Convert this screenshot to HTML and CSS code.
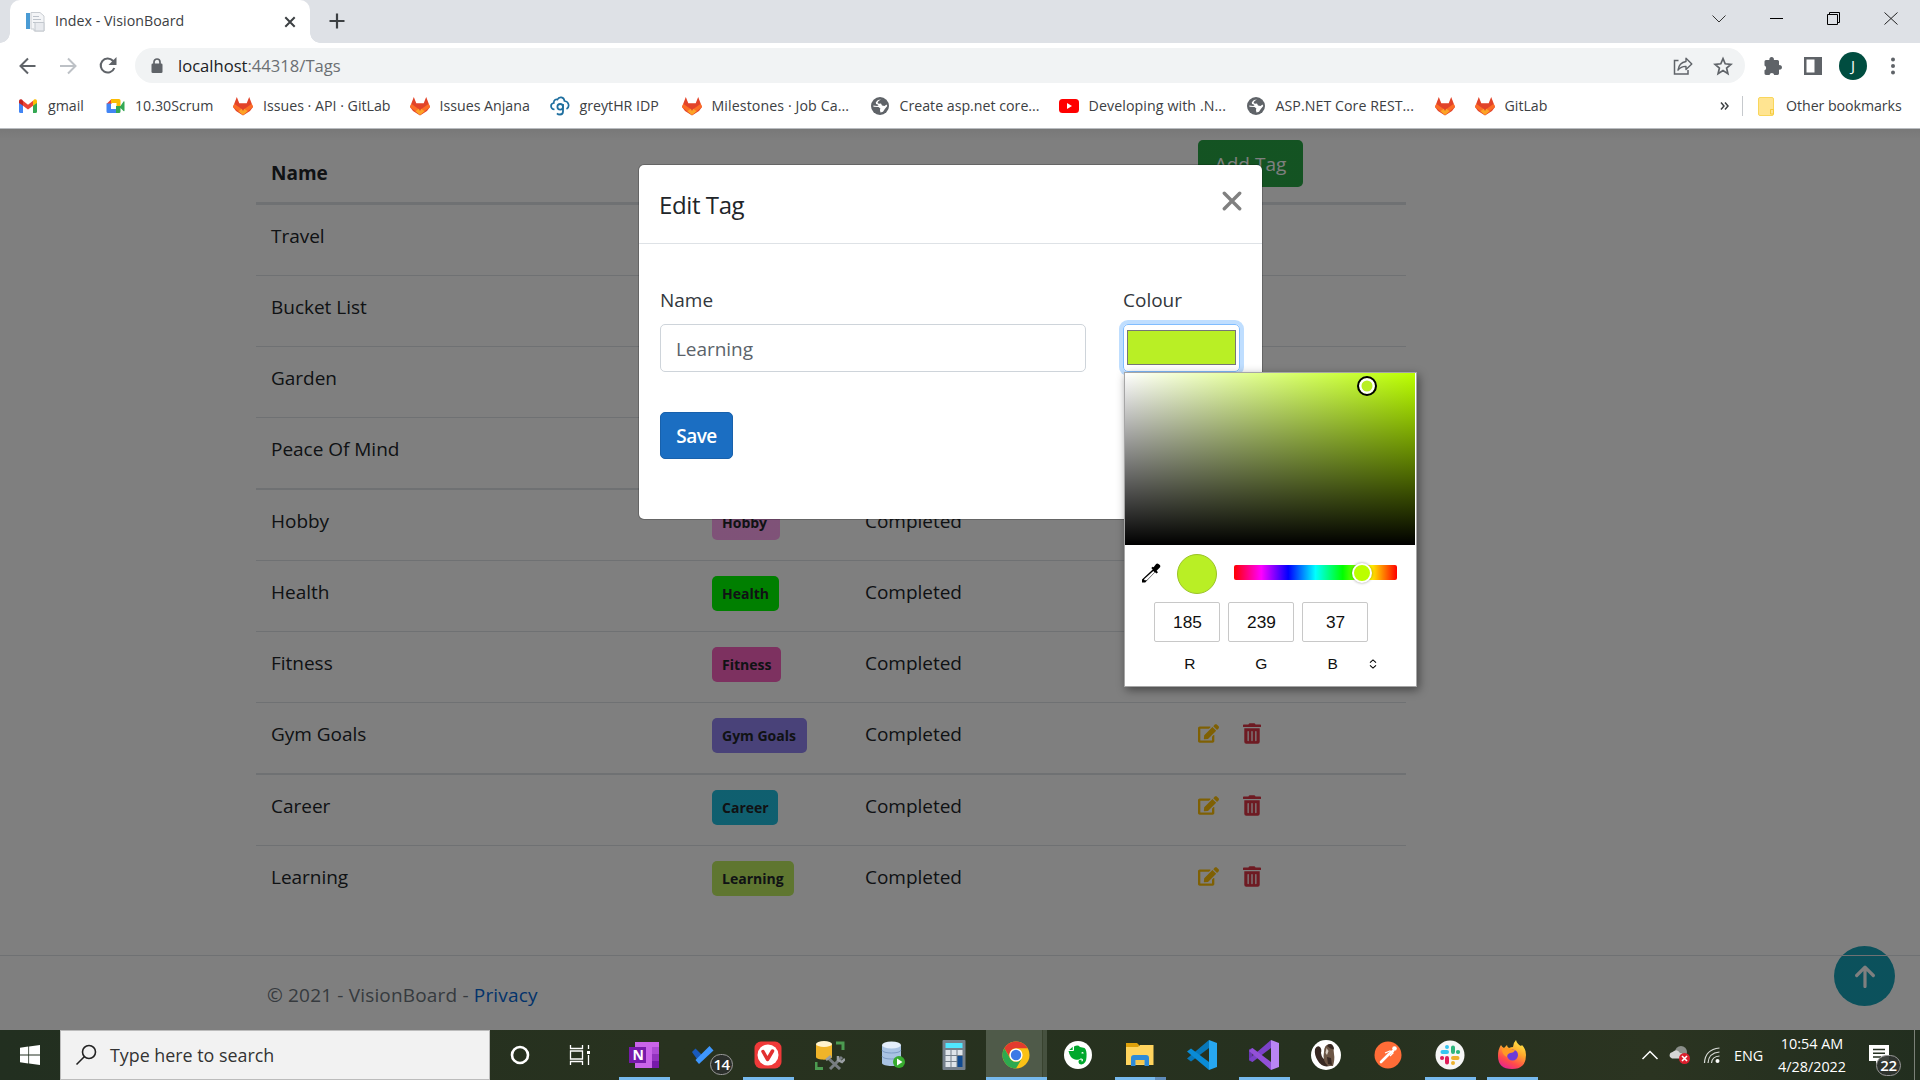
FILE: index.html
```html
<!DOCTYPE html>
<html lang="en">
<head>
<meta charset="utf-8">
<title>Index - VisionBoard</title>
<link rel="stylesheet" href="styles.css">
</head>
<body>
<svg class="defs" width="0" height="0">
  <symbol id="fox" viewBox="0 0 20 20">
    <path fill="#e24329" d="M3.800 1 6.400 7.600h7.200L16.200 1 20 11l-3 4-7 4.600-7-4.600-3-4z"/>
    <path fill="#fc6d26" d="M0 11 10 18.900 20 11l-1.200-3.200L10 14 1.200 7.800z"/>
    <path fill="#fca326" d="m5.400 15.300 4.600-3.600 4.600 3.600L10 19z"/>
    <path fill="#e24329" d="M6 7.500h8L10 15z"/>
  </symbol>
  <symbol id="globe" viewBox="0 0 20 20">
    <circle cx="10" cy="10" r="9" fill="#5f6368"/>
    <path fill="#fff" d="M11 3.500 8.500 5 7.500 7l1.500.8 2-.3 1 2 2.500.5 2-1.500.8 1.500-2.500 3-1.800 2.800-2.500.7-.6-2.400.5-1.600L8.500 11 3.500 10.800l-.2-1.300 3.700.5 1.500-.5-.8-1-1.700-.5-.2-1.800L8 4z"/>
  </symbol>
  <symbol id="edit" viewBox="0 0 576 512">
    <path fill="currentColor" d="M402.600 83.200l90.200 90.200c3.800 3.800 3.800 10 0 13.800L274.400 405.600l-92.800 10.300c-12.400 1.400-22.900-9.100-21.500-21.500l10.300-92.800L388.800 83.200c3.800-3.800 10-3.800 13.800 0zm162-22.900l-48.800-48.800c-15.200-15.200-39.900-15.200-55.200 0l-35.400 35.400c-3.800 3.800-3.800 10 0 13.800l90.200 90.200c3.800 3.800 10 3.800 13.800 0l35.400-35.400c15.200-15.300 15.200-40 0-55.200zM384 346.200V448H64V128h229.800c3.200 0 6.200-1.300 8.500-3.500l40-40c7.600-7.600 2.200-20.500-8.500-20.500H48C21.500 64 0 85.500 0 112v352c0 26.500 21.500 48 48 48h352c26.500 0 48-21.500 48-48V306.200c0-10.700-12.900-16-20.500-8.500l-40 40c-2.200 2.300-3.500 5.300-3.500 8.500z"/>
  </symbol>
  <symbol id="trash" viewBox="0 0 448 512">
    <path fill="currentColor" d="M32 464a48 48 0 0 0 48 48h288a48 48 0 0 0 48-48V128H32zm272-256a16 16 0 0 1 32 0v224a16 16 0 0 1-32 0zm-96 0a16 16 0 0 1 32 0v224a16 16 0 0 1-32 0zm-96 0a16 16 0 0 1 32 0v224a16 16 0 0 1-32 0zM432 32H312l-9.400-18.700A24 24 0 0 0 281.100 0H166.800a23.700 23.700 0 0 0-21.400 13.300L136 32H16A16 16 0 0 0 0 48v32a16 16 0 0 0 16 16h416a16 16 0 0 0 16-16V48a16 16 0 0 0-16-16z"/>
  </symbol>
</svg>

<header class="browser">
  <div class="tabstrip">
    <div class="tab">
      <svg width="20" height="20" viewBox="0 0 20 20"><rect x="1" y="1" width="4" height="16" fill="#4a9bd4"/><path d="M6 .5h9l4 3.500v15H9V17H6z" fill="#f4f5f7" stroke="#c9cdd2"/><path d="M8 4.500h6M8 7.500h8M8 10.500h4M11 14.500h6" stroke="#bcc2ca"/><path d="M10 10.500h9v8.500h-9z" fill="#e8eaee" stroke="#c3c8ce"/></svg>
      <span class="tab-title">Index - VisionBoard</span>
      <svg width="12" height="12" viewBox="0 0 12 12"><path d="m1.300 1.300 9.400 9.400m0-9.400-9.400 9.400" stroke="#3c4043" stroke-width="2"/></svg>
    </div>
    <svg class="newtab" width="16" height="16" viewBox="0 0 16 16"><path d="M8 .5v15M.5 8h15" stroke="#3c4043" stroke-width="2.200"/></svg>
    <div class="window-buttons">
      <svg width="58" height="38" viewBox="0 0 58 38"><path d="m22.500 15.500 6.500 6.500 6.500-6.500" fill="none" stroke="#333"/></svg>
      <svg width="57" height="38" viewBox="0 0 57 38"><path d="M22 18.500h13" stroke="#000"/></svg>
      <svg width="57" height="38" viewBox="0 0 57 38"><path d="M22.500 14.500h10v10h-10zM24.500 14.500v-2h10v10h-2" fill="none" stroke="#000"/></svg>
      <svg width="58" height="38" viewBox="0 0 58 38"><path d="m22.500 12.500 13 12m0-12-13 12" stroke="#222"/></svg>
    </div>
  </div>
  <div class="toolbar">
    <svg width="40" height="40" viewBox="0 0 40 40"><path d="M27.500 20H13M20 12.500 12.500 20l7.500 7.500" fill="none" stroke="#5f6368" stroke-width="2"/></svg>
    <svg width="40" height="40" viewBox="0 0 40 40"><path d="M12 20h15M20 12.500l7.500 7.500-7.500 7.500" fill="none" stroke="#bdc1c6" stroke-width="2"/></svg>
    <svg width="40" height="40" viewBox="0 0 40 40"><path d="M26.300 22a7 7 0 1 1-1.400-7.200l1.300 1.500" fill="none" stroke="#5f6368" stroke-width="2.100"/><path d="M28.500 11v8h-8z" fill="#5f6368"/></svg>
    <div class="omnibox">
      <svg width="12" height="16" viewBox="0 0 12 16"><path d="M3 6V4a3 3 0 0 1 6 0v2" fill="none" stroke="#5f6368" stroke-width="1.700"/><rect x=".5" y="5.500" width="11" height="9.500" rx="1.300" fill="#5f6368"/></svg>
      <span class="url"><b>localhost</b>:44318/Tags</span>
      <svg class="share" width="20" height="20" viewBox="0 0 20 20"><path d="M5.500 4.500H1.500v13.500h13.500v-4" fill="none" stroke="#5f6368" stroke-width="1.500"/><path d="M13 2.200 18.800 8 13 13.400V10.400C9.500 10.300 7 11.500 5 14.200 5.500 10 8 6.300 13 5.500z" fill="none" stroke="#5f6368" stroke-width="1.400" stroke-linejoin="round"/></svg>
      <svg width="20" height="20" viewBox="0 0 20 20"><path d="m10 2.600 2.200 5.200 5.700.5-4.300 3.700 1.300 5.600-4.900-3-4.900 3 1.300-5.600L2.100 8.300l5.700-.5z" fill="none" stroke="#5f6368" stroke-width="1.700"/></svg>
    </div>
    <div class="toolbar-right">
      <svg width="20" height="20" viewBox="0 0 20 20"><path fill="#5f6368" d="M1.500 5.500q0-1.500 1.500-1.500h3.500a2.300 2.300 0 1 1 4.300 0H14.500q1.500 0 1.500 1.500v3.700a2.300 2.300 0 1 1 0 4.400v4q0 1.400-1.500 1.400h-3.300a2.400 2.400 0 0 0-4.700 0H3q-1.500 0-1.500-1.400v-3.300a2.500 2.500 0 0 0 0-4.700z"/></svg>
      <svg width="20" height="20" viewBox="0 0 20 20"><path fill="#5f6368" fill-rule="evenodd" d="M1 1h18v18H1zm2.500 2.500v13h8v-13z"/></svg>
      <span class="avatar">J</span>
      <svg class="menu" width="20" height="20" viewBox="0 0 20 20"><g fill="#5f6368"><circle cx="10" cy="3.500" r="2"/><circle cx="10" cy="10" r="2"/><circle cx="10" cy="16.500" r="2"/></g></svg>
    </div>
  </div>
  <nav class="bookmarks">
    <a><svg viewBox="0 0 20 20"><path fill="#4285f4" d="M1 5.500 5 8.500V17H2.500Q1 17 1 15.500z"/><path fill="#34a853" d="m15 8.500 4-3v10q0 1.500-1.500 1.500H15z"/><path fill="#ea4335" d="M5 4.800 10 8.700l5-3.900v5L10 13.500 5 9.800z"/><path fill="#c5221f" d="M1 5.500C1 3 3.300 2.500 5 4.800v5L1 7z"/><path fill="#fbbc04" d="M19 5.500C19 3 16.700 2.500 15 4.800v5L19 7z"/></svg><span>gmail</span></a>
    <a><svg viewBox="0 0 20 20"><path fill="#ea4335" d="M6.500 3v5H1.500z"/><path fill="#fbbc04" d="M6 3h8q1.500 0 1.500 1.500V10h-4V7H6z"/><path fill="#4285f4" d="M1.500 7.500H6V13h5v4H3q-1.500 0-1.500-1.500z"/><path fill="#34a853" d="M11 13V10h4.500l3-4.500q1-.5 1 .5v8.500q0 1-1 .5l-3-3V15.500q0 1.500-1.500 1.500h-3z"/></svg><span>10.30Scrum</span></a>
    <a><svg viewBox="0 0 20 20"><use href="#fox"/></svg><span>Issues · API · GitLab</span></a>
    <a><svg viewBox="0 0 20 20"><use href="#fox"/></svg><span>Issues Anjana</span></a>
    <a><svg viewBox="0 0 20 20"><path d="M4.500 13.500C0 13 0 7.500 3.800 7 3.500 3.500 6.500 3 7.500 3.500 9 .2 14 .7 14.500 5c4.500.5 5.500 6 2 8" fill="none" stroke="#1f6f9f" stroke-width="1.700"/><path d="M13 8v7.500q0 3-3 3-2 0-3-1.200" fill="none" stroke="#1f6f9f" stroke-width="1.800"/><circle cx="10.200" cy="10.800" r="2.800" fill="none" stroke="#1f6f9f" stroke-width="1.800"/></svg><span>greytHR IDP</span></a>
    <a><svg viewBox="0 0 20 20"><use href="#fox"/></svg><span>Milestones · Job Ca...</span></a>
    <a><svg viewBox="0 0 20 20"><use href="#globe"/></svg><span>Create asp.net core...</span></a>
    <a><svg viewBox="0 0 20 20"><rect y="3" width="20" height="14" rx="3.500" fill="red"/><path fill="#fff" d="M8 7v6l5-3z"/></svg><span>Developing with .N...</span></a>
    <a><svg viewBox="0 0 20 20"><use href="#globe"/></svg><span>ASP.NET Core REST...</span></a>
    <a><svg viewBox="0 0 20 20"><use href="#fox"/></svg></a>
    <a><svg viewBox="0 0 20 20"><use href="#fox"/></svg><span>GitLab</span></a>
    <div class="bookmarks-end">
      <svg class="more" width="9" height="8" viewBox="0 0 9 8"><path d="m1 .5 3 3.500-3 3.500M5 .5 8 4 5 7.500" fill="none" stroke="#3c4043" stroke-width="1.500"/></svg>
      <i class="divider"></i>
      <svg width="16" height="19" viewBox="0 0 16 19"><rect x=".5" y=".5" width="15" height="18" rx="1.500" fill="#ffe491" stroke="#f9d65c"/><path d="M12.500 17v-4.500h3V17z" fill="#ffe491" stroke="#f5cb3d"/></svg>
      <span>Other bookmarks</span>
    </div>
  </nav>
</header>

<main class="page">
  <section class="board">
    <div class="row head"><strong>Name</strong><button class="add">Add Tag</button></div>
    <div class="row"><span>Travel</span></div>
    <div class="row"><span>Bucket List</span></div>
    <div class="row"><span>Garden</span></div>
    <div class="row"><span>Peace Of Mind</span></div>
    <div class="row thick"><span>Hobby</span><div><span class="badge hobby">Hobby</span></div><span>Completed</span></div>
    <div class="row"><span>Health</span><div><span class="badge health">Health</span></div><span>Completed</span></div>
    <div class="row"><span>Fitness</span><div><span class="badge fitness">Fitness</span></div><span>Completed</span></div>
    <div class="row"><span>Gym Goals</span><div><span class="badge gym">Gym Goals</span></div><span>Completed</span><div class="actions"><svg class="edit"><use href="#edit"/></svg><svg class="trash"><use href="#trash"/></svg></div></div>
    <div class="row thick"><span>Career</span><div><span class="badge career">Career</span></div><span>Completed</span><div class="actions"><svg class="edit"><use href="#edit"/></svg><svg class="trash"><use href="#trash"/></svg></div></div>
    <div class="row"><span>Learning</span><div><span class="badge learning">Learning</span></div><span>Completed</span><div class="actions"><svg class="edit"><use href="#edit"/></svg><svg class="trash"><use href="#trash"/></svg></div></div>
  </section>
  <div class="to-top"><svg width="20" height="23" viewBox="0 0 20 23"><path d="M10 21.500V2.500M1.700 10.500 10 2.200l8.300 8.300" fill="none" stroke="#fff" stroke-width="3.200" stroke-linecap="round" stroke-linejoin="round"/></svg></div>
  <footer class="footer">© 2021 - VisionBoard - <a>Privacy</a></footer>
  <div class="backdrop"></div>

  <div class="modal">
    <div class="modal-head">
      <h5>Edit Tag</h5>
      <svg width="20" height="20" viewBox="0 0 20 20"><path d="m2.300 2.300 15.400 15.400m0-15.400L2.300 17.700" stroke="#808080" stroke-width="3.400" stroke-linecap="round"/></svg>
    </div>
    <div class="modal-body">
      <div class="field name"><label>Name</label><div class="input">Learning</div></div>
      <div class="field colour"><label>Colour</label><div class="input swatch"><i></i></div></div>
    </div>
    <button class="save">Save</button>
    <div class="picker">
      <div class="shade"><i class="handle"></i></div>
      <div class="hue-row">
        <svg width="20" height="20" viewBox="0 0 20 20"><path d="M11.700 3.700 10.300 5l1.400 1.400L1 16.500V19.500h3.200L14 9.200l1.500 1.400 1.500-1.400-1.400-1.500 3.200-3.100q1-1.300 0-2.500l-1.300-1.200q-1.200-1-2.400 0L12.600 4.200z"/><path fill="#fff" d="m12.300 8 1.300 1.300-7.800 8H3.600l-.6-1z"/></svg>
        <i class="current"></i>
        <div class="hue"><i></i></div>
      </div>
      <div class="channels"><span>185</span><span>239</span><span>37</span></div>
      <div class="names"><span>R</span><span>G</span><span>B</span><svg width="8" height="10" viewBox="0 0 8 10"><path d="M1 3.700 4 .9l3 2.800M1 6.300l3 2.800 3-2.800" fill="none" stroke="#000" stroke-width="1.100"/></svg></div>
    </div>
  </div>
</main>

<footer class="taskbar">
  <div class="start"><svg width="20" height="20" viewBox="0 0 20 20"><path fill="#fff" d="M0 2.700 8.300 1.500v8H0zM9.100 1.400 20 0v9.500H9.100zM0 10.400h8.300v8L0 17.200zM9.100 10.400H20V20l-10.900-1.500z"/></svg></div>
  <div class="search"><svg width="22" height="22" viewBox="0 0 22 22"><circle cx="14" cy="8" r="6.500" fill="none" stroke="#222" stroke-width="1.600"/><path d="m9.500 12.500-8 8" stroke="#222" stroke-width="1.600"/></svg><span>Type here to search</span></div>
  <div class="sys"><svg width="22" height="22" viewBox="0 0 22 22"><circle cx="11" cy="11" r="8" fill="none" stroke="#fff" stroke-width="2.600"/></svg></div>
  <div class="sys"><svg width="22" height="20" viewBox="0 0 22 20"><path d="M1.500 0v3.500h12V0M1.500 20v-3.500h12V20M1.500 6h12v8h-12zM19.500 0v4M19.500 10v10" fill="none" stroke="#fff" stroke-width="1.300"/><path fill="#fff" d="M18 6h3v3h-3z"/></svg></div>
  <div class="apps">
    <div class="app on"><svg viewBox="0 0 30 30"><path fill="#ca64ea" d="M6 2h24v26H6z"/><path fill="#ae4bd5" d="M23 7h7v7h-7z"/><path fill="#9332bf" d="M23 14h7v7h-7z"/><path fill="#7719aa" d="M23 21h7v7h-7z"/><path fill="#7719aa" d="M0 7h17v16H0z"/><text x="3.500" y="20" class="glyph">N</text></svg></div>
    <div class="app"><svg viewBox="0 0 30 30"><path fill="#195abd" d="m1 12 3.500-3.500 7 7L8 22z"/><path fill="#3f98ff" d="M8 24 4.500 20 18.500 6l4 4.500z"/></svg><em>14</em></div>
    <div class="app on"><svg viewBox="0 0 30 30"><rect x="1.500" y="1.500" width="27" height="27" rx="6.500" fill="#ef3939"/><circle cx="15" cy="15" r="10.500" fill="#fff"/><path d="m10 11.500 4.500 8L19.500 11" fill="none" stroke="#e23030" stroke-width="3.500" stroke-linecap="round" stroke-linejoin="round"/></svg></div>
    <div class="app"><svg viewBox="0 0 30 30"><path fill="#f0b429" d="M1 4v13c0 3.500 16 3.500 16 0V4z"/><ellipse cx="9" cy="4" rx="8" ry="3" fill="#fff3cf"/><path d="M21 3h7v7M1 22v6.500h7" fill="none" stroke="#4c9b51" stroke-width="3"/><path d="m13 18 12 11M27 17 15 29" stroke="#777d82" stroke-width="3"/><path d="m11 20 5-4M23 16v4l4 2 3-3" fill="none" stroke="#9a9fa3" stroke-width="2.500"/></svg></div>
    <div class="app"><svg viewBox="0 0 30 30"><path fill="#a9c3e3" d="M5 5v18c0 4 19 4 19 0V5z"/><path d="M5 10c0 4 19 4 19 0M5 16c0 4 19 4 19 0" fill="none" stroke="#7d9cc4"/><ellipse cx="14.500" cy="5" rx="9.500" ry="3.500" fill="#e4eefb"/><circle cx="22" cy="22" r="6" fill="#37ab2e"/><path fill="#fff" d="M20 18.500v7l5.500-3.500z"/></svg></div>
    <div class="app"><svg viewBox="0 0 30 30"><rect x="3.500" width="23" height="30" rx="1" fill="#75808b"/><path fill="#50e6ff" d="M6.500 3h17v5h-17z"/><path fill="#dfe5ea" d="M6.500 10h5v5h-5zM12.500 10h5v5h-5zM18.500 10h5v5h-5zM6.500 16h5v5h-5zM12.500 16h5v5h-5zM6.500 22h5v5h-5zM12.500 22h5v5h-5z"/><path fill="#0f4a91" d="M18.500 16h5v11h-5z"/></svg></div>
    <div class="app active"><svg viewBox="0 0 30 30"><circle cx="15" cy="15" r="13.500" fill="#fbc116"/><path fill="#e33b2e" d="M3.300 8.250A13.500 13.500 0 0 1 26.700 8.250H15a6.750 6.750 0 0 0-6 9.800z"/><path fill="#2da94f" d="M3.300 8.250 9.150 18.400A6.750 6.750 0 0 0 20.850 18.400L15 28.500A13.500 13.500 0 0 1 3.300 8.250z"/><circle cx="15" cy="15" r="6.600" fill="#fff"/><circle cx="15" cy="15" r="5.200" fill="#3c79e6"/></svg></div>
    <div class="app"><svg viewBox="0 0 30 30"><circle cx="15" cy="15" r="14" fill="#fff"/><path fill="#00a82d" d="M5.500 11h4.500q1 0 1-1V6.500q4-2 6 .5l4.500 1q2.500 2 2 9-.2 7-5 7.500-3 0-3-3 0-2 3-2v2q1.500 0 1.500-1.500 0-2-2.500-1.500-1.500 2-5.500 1-5-1-6.500-8.500zM9.700 6.700V10H6.200z"/><path fill="#fff" d="M18.500 12.500q1.700-1.200 2.200 1h-2.200z"/></svg></div>
    <div class="app on split"><svg viewBox="0 0 30 30"><path fill="#dea10b" d="M1 3h11l2 2v5H1z"/><path fill="#ffd45e" d="M1 7h12l2-2h13.500v20H1z"/><path fill="#2e8bd8" d="M6 26v-8q0-3 3-3h12q3 0 3 3v8h-4.500v-6h-9v6z"/><path fill="#f5c64c" d="M11 20h8v4h-8z"/></svg></div>
    <div class="app"><svg viewBox="0 0 30 30"><path fill="#0877b9" d="M22 0v8L4 21.500 0 18.500z"/><path fill="#0a8bd6" d="M22 30v-8L4 8.500 0 11.500z"/><path fill="#27a7f1" d="m22 0 8 3v24l-8 3z"/></svg></div>
    <div class="app on"><svg viewBox="0 0 30 30"><path fill="#6a38b5" d="M0 9.500 3.500 8v14L0 20.500z"/><path fill="#7b42c8" d="m3.500 22 18.500-14V0L0 19z"/><path fill="#9250d8" d="m3.500 8 18.500 14v8L0 11z"/><path fill="#b985f5" d="m22 0 8 3v24l-8 3z"/></svg></div>
    <div class="app"><svg viewBox="0 0 30 30"><circle cx="15" cy="15" r="15" fill="#fff"/><path fill="#382923" d="M4 9q2-4 5-2 2 2 1 6 1 6 4 6l5 7q-8 2-12-5Q3 15 4 9z"/><path fill="#6b5545" d="M13 12q0-7 5-8 4 0 4.500 5l.5 5q1 5-1 12h-5q-6-5-4-14z"/><path fill="#382923" d="M16 6q2-3 5-1.500 2 2 2 5l-3.500-1zM16 17l4 1 1 7-4-1z"/><path fill="#d8cdc3" d="m15.500 8 2 3-1.500 4-1.500-2z"/></svg></div>
    <div class="app"><svg viewBox="0 0 30 30"><circle cx="15" cy="15" r="13.500" fill="#ff6c37"/><path d="m8 22 8-8 4-3" stroke="#fff" stroke-width="2.600" stroke-linecap="round"/><circle cx="21.500" cy="8.500" r="2.300" fill="#fff"/><path d="m12 13 5-2 3 2-3 3" fill="none" stroke="#fff" stroke-width="1.200"/></svg></div>
    <div class="app on"><svg viewBox="0 0 30 30"><circle cx="15" cy="15" r="14.500" fill="#f6f6f6"/><g stroke-width="4" stroke-linecap="round"><path d="M7.500 12H12M12 6.900v.2" stroke="#36c5f0"/><path d="M18 7.500V12M23.100 12h-.2" stroke="#2eb67d"/><path d="M18 18h4.500M18 23v.1" stroke="#ecb22e"/><path d="M12 18v4.500M7 18h.1" stroke="#e01e5a"/></g></svg></div>
    <div class="app on"><svg viewBox="0 0 30 30"><defs><linearGradient id="ff" x1=".8" y1="0" x2=".3" y2="1"><stop offset="0" stop-color="#fff04a"/><stop offset=".4" stop-color="#ffa72c"/><stop offset=".75" stop-color="#ff4a4a"/><stop offset="1" stop-color="#e8258f"/></linearGradient></defs><path fill="url(#ff)" d="M4 5q1 2 3 3l3-3q0 2 2 3 2-1 4-1 0-4 3-7 1 4 5 6l1-1q4 4 4 10 0 14-14 14T1 16Q1 9 4 5z"/><circle cx="15.500" cy="15" r="5.500" fill="#6d3bd8"/><path fill="#ff9a24" d="M5 9q6-2 9 0 2 1 4 1-1 3-5 3-3 1-3 4-5-2-5-8z"/></svg></div>
  </div>
  <div class="tray">
    <svg width="18" height="12" viewBox="0 0 18 12"><path d="m1.500 10 7.500-7.500 7.500 7.500" fill="none" stroke="#fff" stroke-width="1.500"/></svg>
    <svg width="22" height="20" viewBox="0 0 22 20"><circle cx="12" cy="7" r="6" fill="#8b8f8a"/><path fill="#d5d5d5" d="M1 12q-1.500-4 2.500-5Q8 3 11 8q4 0 4 5.500H3z"/><circle cx="15.500" cy="13.500" r="5.500" fill="#da1f2d"/><path d="m13 11 5 5m0-5-5 5" stroke="#fff" stroke-width="1.600"/></svg>
    <svg width="18" height="18" viewBox="0 0 18 18"><g fill="none" stroke="#d9dcd8" stroke-width="1.200"><path d="M1.500 17Q2 3.500 16.500 2"/><path d="M5 17Q5.500 7 16.500 6"/><path d="M8.500 17q.5-6.500 8-7"/></g><circle cx="14.500" cy="15" r="2" fill="#fff"/></svg>
    <span class="lang">ENG</span>
    <span class="clock">10:54 AM<br>4/28/2022</span>
    <div class="notes"><svg width="20" height="20" viewBox="0 0 20 20"><path fill="#fff" d="M0 0h20v16H10l-3 3v-3H0z"/><path d="M4 4.500h12M4 8.200h12M4 12h8" stroke="#263122" stroke-width="1.400"/></svg><em>22</em></div>
    <i class="peek"></i>
  </div>
</footer>
</body>
</html>
```
FILE: styles.css
```css
* { box-sizing: border-box; }
body {
  margin: 0;
  width: 1920px;
  height: 1080px;
  overflow: hidden;
  display: flex;
  flex-direction: column;
  font-family: "Open Sans", "Noto Sans", sans-serif;
  font-size: 19px;
  color: #212529;
  background: #fff;
}
.defs { position: absolute; }
svg { display: block; flex: none; }
i, em { font-style: normal; }
button { font-family: inherit; border: 0; padding: 0; }

/* browser chrome */
.browser { height: 129px; flex: none; background: #fff; border-bottom: 1px solid #b9bcc0; color: #3c4043; font-size: 14.2px; }
.tabstrip { height: 43px; background: #dee1e6; display: flex; align-items: center; padding-left: 10px; }
.tab { position: relative; width: 300px; height: 43px; background: #fff; border-radius: 10px 10px 0 0; display: flex; align-items: center; padding: 0 14px 0 15px; }
.tab::before, .tab::after { content: ""; position: absolute; bottom: 0; width: 10px; height: 10px; }
.tab::before { left: -10px; background: radial-gradient(circle at 0 0, transparent 9.500px, #fff 10px); }
.tab::after { right: -10px; background: radial-gradient(circle at 100% 0, transparent 9.500px, #fff 10px); }
.tab-title { margin-left: 10px; flex: 1; white-space: nowrap; padding-bottom: 2px; letter-spacing: .05px; }
.newtab { margin: 0 0 1px 19px; }
.window-buttons { margin-left: auto; height: 43px; display: flex; }
.toolbar { height: 45px; display: flex; align-items: center; padding-left: 8px; }
.omnibox { width: 1610px; height: 35px; border-radius: 18px; background: #f1f3f4; margin-left: 7px; display: flex; align-items: center; padding: 0 12px 0 16px; }
.url { font-size: 16.600px; color: #6b6f73; margin-left: 15px; padding-bottom: 1px; }
.url b { font-weight: 400; color: #202124; }
.share { margin-left: auto; margin-right: 20px; }
.toolbar-right { display: flex; align-items: center; flex: 1; padding-left: 18px; gap: 20px; }
.toolbar-right .avatar { width: 28px; height: 28px; border-radius: 50%; background: #004d40; color: #fff; text-align: center; line-height: 27px; font-size: 15px; margin: 0 -3px 0 -4px; }
.toolbar-right .menu { margin-left: -1px; }
.bookmarks { height: 36px; display: flex; align-items: center; padding-left: 18px; white-space: nowrap; }
.bookmarks span { padding-bottom: 1px; }
.bookmarks a { display: flex; align-items: center; gap: 10px; margin-right: 20px; }
.bookmarks a svg { width: 20px; height: 20px; }
.bookmarks a span { width: 137px; }
.bookmarks a:nth-child(1) span { width: 37px; }
.bookmarks a:nth-child(2) span { width: 78px; }
.bookmarks a:nth-child(3) span { width: 126.500px; }
.bookmarks a:nth-child(4) span { width: 90px; }
.bookmarks a:nth-child(5) span { width: 82px; }
.bookmarks a:nth-child(6) span { width: 138px; letter-spacing: .1px; }
.bookmarks a:nth-child(7) span { width: 139px; }
.bookmarks a:nth-child(8) span { letter-spacing: .1px; }
.bookmarks a:nth-child(9) span { width: 139px; letter-spacing: .05px; }
.bookmarks a:nth-child(11) span { width: 50px; }
.bookmarks-end { margin-left: auto; display: flex; align-items: center; padding-right: 18px; }
.divider { width: 1px; height: 20px; background: #c6c9cd; margin: 0 15px 0 13px; }
.bookmarks-end span { margin-left: 12px; width: 116px; letter-spacing: -.05px; }

/* page under the modal */
.page { position: relative; height: 901px; flex: none; }
.board { width: 1150px; height: 826px; margin-left: 256px; }
.row { display: grid; grid-template-columns: 441px 153px 333px 1fr; height: 71px; border-top: 1px solid #dee2e6; padding: 15px 0 0 15px; line-height: 30px; }
.row > span { padding-top: 1px; letter-spacing: -.02px; }
.row.head { height: 76px; border-top: 0; border-bottom: 3px solid #dee2e6; padding-top: 29px; grid-template-columns: 927px 1fr; }
.row.head + .row { border-top: 0; height: 70px; }
.row.thick { border-top-width: 2px; height: 72px; }
.row strong { font-weight: 700; }
.add { width: 105px; height: 47px; margin-top: -18px; background: #28a745; color: #fff; border-radius: 5px; font-size: 19px; }
.badge { display: inline-block; height: 35px; line-height: 36px; padding: 0 10px; border-radius: 5px; font-size: 14px; font-weight: 700; vertical-align: top; }
.hobby { background: #ffa5f0; width: 68px; }
.health { background: #00ff00; width: 67px; }
.fitness { background: #fa62c0; width: 69px; }
.gym { background: #9284f2; width: 95px; }
.career { background: #1fbedf; width: 66px; }
.learning { background: #beec60; width: 82px; }
.actions { display: flex; gap: 24px; padding-top: 5px; }
.edit { width: 21px; height: 21px; color: #ffc107; }
.trash { width: 18px; height: 21px; color: #dc3545; }
.footer { height: 75px; border-top: 1px solid #dee2e6; padding-left: 267px; line-height: 79px; color: #6c757d; position: relative; letter-spacing: .17px; }
.footer a { color: #0366d6; }
.to-top { position: absolute; left: 1834px; top: 817px; width: 61px; height: 60px; border-radius: 50%; background: #17a2b8; display: flex; align-items: center; justify-content: center; }
.backdrop { position: absolute; inset: 0; background: linear-gradient(rgba(0, 0, 0, .53), rgba(0, 0, 0, .5) 12px); }

/* modal */
.modal { position: absolute; left: 638px; top: 35px; width: 625px; height: 356px; background: #fff; background-clip: padding-box; border: 1px solid rgba(0, 0, 0, .2); border-radius: 6px; }
.modal-head { height: 79px; border-bottom: 1px solid #dee2e6; display: flex; justify-content: space-between; padding: 21px 20px 0; }
.modal-head svg { margin-top: 5px; }
h5 { margin: 0; font-size: 24px; line-height: 38px; font-weight: 500; letter-spacing: -.4px; }
.modal-body { display: flex; gap: 37px; padding: 41px 20px 0 21px; color: #32373c; }
.field label { display: block; line-height: 30px; height: 39px; }
.field.name { width: 426px; }
.field.colour { width: 117px; }
.input { height: 48px; border: 1px solid #ced4da; border-radius: 5px; padding-left: 15px; line-height: 48px; color: #5b636a; letter-spacing: -.05px; }
.swatch { border-color: #80bdff; box-shadow: 0 0 0 4px #bfdeff; padding: 5px 3px; }
.swatch i { display: block; height: 35px; background: #b9ef25; border: 1px solid #767676; }
.save { display: block; margin: 40px 0 0 21px; width: 73px; height: 47px; border-radius: 5px; background: #1b6ec2; border: 1px solid #1861ac; color: #fff; font-size: 19px; font-weight: 600; letter-spacing: -.5px; }

/* colour popup */
.picker { position: absolute; left: 485px; top: 207px; width: 293px; height: 315px; background: #fff; border: 1px solid #a6a6a6; box-shadow: 2px 3px 9px rgba(0, 0, 0, .45); font-family: "Liberation Sans", Arial, sans-serif; color: #101010; }
.shade { width: 290px; height: 172px; position: relative; background: linear-gradient(to top, #000, transparent), linear-gradient(to right, #fff, #bbff00); }
.handle { position: absolute; left: 231.500px; top: 2.500px; width: 20px; height: 20px; border-radius: 50%; border: 2.500px solid #000; background: #b9ef25; box-shadow: inset 0 0 0 2.500px #fff; }
.hue-row { display: flex; align-items: flex-start; padding: 9px 0 0 16px; height: 57px; }
.hue-row svg { margin-top: 9px; }
.current { width: 40px; height: 40px; border-radius: 50%; background: #b9ef25; border: 1px solid #9bc328; margin-left: 16px; }
.hue { position: relative; width: 163px; height: 15px; margin: 11px 0 0 17px; border-radius: 2px; background: linear-gradient(to right, #f00, #f0f 16.700%, #00f 33.300%, #0ff 50%, #0f0 66.700%, #ff0 83.300%, #f00); }
.hue i { position: absolute; left: 118px; top: -2px; width: 20px; height: 20px; border-radius: 50%; background: #bbff00; border: 2.500px solid #fff; box-shadow: 0 0 3px rgba(0, 0, 0, .4); }
.channels { display: flex; gap: 8px; padding-left: 29px; }
.channels span { width: 66px; height: 40px; border: 1px solid #c8c8c8; border-radius: 2px; text-align: center; line-height: 39px; font-size: 17.300px; padding-left: 1px; }
.names { display: flex; align-items: center; padding: 12px 0 0 29px; font-size: 15.500px; }
.names span { width: 71.500px; text-align: center; line-height: 20px; }

/* taskbar */
.taskbar { height: 50px; flex: none; display: flex; background: linear-gradient(90deg, #222f20, #28321f 35%, #26311f 70%, #2b3421 86%, #222e1f); color: #fff; }
.start { width: 60px; display: flex; align-items: center; justify-content: center; }
.search { width: 430px; background: #f2f2f2; border: 1px solid #bcbcbc; color: #333; display: flex; align-items: center; padding-left: 14px; gap: 13px; font-size: 17.850px; }
.sys { width: 60px; display: flex; align-items: center; justify-content: center; }
.apps { display: flex; margin-left: 3px; }
.app { position: relative; width: 62px; display: flex; align-items: center; justify-content: center; }
.app svg { width: 30px; height: 30px; }
.app.on::after { content: ""; position: absolute; left: 6px; bottom: 0; width: 51px; height: 3px; background: #76b9ed; }
.app.split::after { background: linear-gradient(90deg, #76b9ed 40px, #5f8cba 40px); }
.app.active { background: linear-gradient(90deg, transparent 1px, #4f5a49 1px 57px, #39432f 57px 58px, #46513f 58px); }
.app.active::after { content: ""; position: absolute; left: 1px; right: 0; bottom: 0; height: 3px; background: #76b9ed; }
.glyph { font: 700 14px "Open Sans", sans-serif; fill: #fff; }
.app em, .notes em { position: absolute; border: 1px solid #999; border-radius: 11px; background: #2b2f2b; text-align: center; }
.app em { left: 35px; top: 24px; width: 23px; height: 21px; font-size: 15px; line-height: 19px; font-weight: 600; letter-spacing: -.5px; }
.tray { margin-left: auto; display: flex; align-items: center; }
.tray > svg:nth-child(2) { margin-left: 10px; }
.tray > svg:nth-child(3) { margin-left: 12px; }
.lang { width: 29px; margin-left: 13px; font-size: 14.400px; }
.clock { width: 76px; margin-left: 11px; text-align: center; font-size: 14.400px; line-height: 23px; white-space: nowrap; }
.notes { position: relative; margin-left: 19px; }
.notes em { left: 7px; top: 10px; width: 25px; height: 21px; font-size: 15px; line-height: 19px; font-weight: 600; letter-spacing: -.3px; background: rgba(48, 52, 48, .92); }
.peek { width: 1px; height: 50px; background: #7b8178; margin: 0 5px 0 25px; }
```
